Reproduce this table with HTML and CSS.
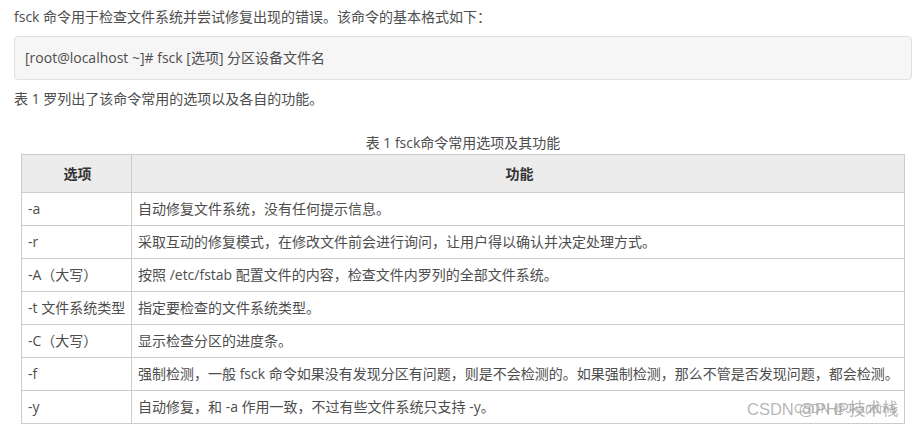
FILE: index.html
```html
<!DOCTYPE html>
<html>
    <head>
        <title>fsck 命令</title>
        <link rel="stylesheet" href="styles.css">
    </head>
    <body>
        <div class="article">
            <p class="para">fsck 命令用于检查文件系统并尝试修复出现的错误。该命令的基本格式如下：</p>
            <pre class="code">[root@localhost ~]# fsck [选项] 分区设备文件名</pre>
            <p class="para">表 1 罗列出了该命令常用的选项以及各自的功能。</p>

            <div class="caption">表 1 fsck命令常用选项及其功能</div>
            <div class="table-wrap">
                <table class="options">
                    <thead>
                        <tr>
                            <th class="col-opt">选项</th>
                            <th>功能</th>
                        </tr>
                    </thead>
                    <tbody>
                        <tr><td class="col-opt">-a</td><td>自动修复文件系统，没有任何提示信息。</td></tr>
                        <tr><td class="col-opt">-r</td><td>采取互动的修复模式，在修改文件前会进行询问，让用户得以确认并决定处理方式。</td></tr>
                        <tr><td class="col-opt">-A（大写）</td><td>按照 /etc/fstab 配置文件的内容，检查文件内罗列的全部文件系统。</td></tr>
                        <tr><td class="col-opt">-t 文件系统类型</td><td>指定要检查的文件系统类型。</td></tr>
                        <tr><td class="col-opt">-C（大写）</td><td>显示检查分区的进度条。</td></tr>
                        <tr><td class="col-opt">-f</td><td>强制检测，一般 fsck 命令如果没有发现分区有问题，则是不会检测的。如果强制检测，那么不管是否发现问题，都会检测。</td></tr>
                        <tr><td class="col-opt">-y</td><td>自动修复，和 -a 作用一致，不过有些文件系统只支持 -y。</td></tr>
                    </tbody>
                </table>
                <div class="watermark">
                    <span class="wm-big">CSDN @PHP技术栈</span>
                    <span class="wm-small">CSDN @Jkandma</span>
                </div>
            </div>
        </div>
    </body>
</html>
```

FILE: styles.css
```css
html, body {
    margin: 0;
    padding: 0;
    background: #fff;
}

body {
    font-family: "Open Sans", "Noto Sans CJK SC", sans-serif;
    font-size: 14px;
    color: #4d4d4d;
}

.article {
    padding: 0 1px 0 14px;
}

.para {
    margin: 0;
    line-height: 24px;
    padding-top: 5px;
}

.code {
    margin: 7px 0 2px;
    padding: 0 10px;
    height: 42px;
    line-height: 42px;
    font-family: "Open Sans", "Noto Sans CJK SC", sans-serif;
    font-size: 14px;
    color: #4d4d4d;
    background: #f6f6f6;
    border: 1px solid #e0e0e0;
    border-radius: 4px;
}

.caption {
    margin-top: 21px;
    text-align: center;
    line-height: 22px;
}

.table-wrap {
    position: relative;
    padding: 0 7px;
}

.options {
    width: 100%;
    border-collapse: collapse;
    border: 1px solid #cccccc;
}

.options th,
.options td {
    border: 1px solid #cccccc;
    padding: 0 3px 0 6px;
    text-align: left;
    line-height: 20px;
}

.options th {
    background: #ececec;
    font-weight: bold;
    text-align: center;
    height: 37px;
    color: #333;
}

.options td {
    height: 32px;
}

.options .col-opt {
    width: 99px;
    padding-right: 4px;
    white-space: nowrap;
}

.watermark {
    position: absolute;
    right: 15px;
    bottom: 3px;
    width: 150px;
    height: 26px;
    color: rgba(150, 150, 150, 0.7);
}

.wm-big {
    position: absolute;
    left: 0;
    top: 1px;
    font-size: 16.5px;
    font-family: "Liberation Sans", "Noto Sans CJK SC", sans-serif;
    white-space: nowrap;
}

.wm-small {
    position: absolute;
    left: 47px;
    top: 7px;
    font-size: 12.5px;
    font-family: "Liberation Sans", sans-serif;
    white-space: nowrap;
}
```
